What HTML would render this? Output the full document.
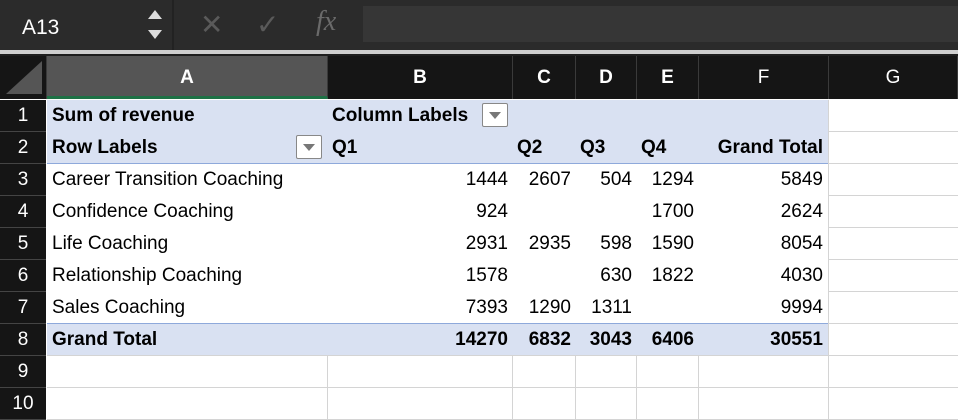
<!DOCTYPE html>
<html><head><style>
body{margin:0;width:958px;height:420px;overflow:hidden;background:#fff;font-family:"Liberation Sans",sans-serif;position:relative}
.tb{position:absolute;left:0;top:0;width:958px;height:50px;background:#2b2b2b}
.sep{position:absolute;left:0;top:50px;width:958px;height:4px;background:#cfcfcf;border-bottom:2px solid #1e1e1e}
.ch{position:absolute;top:56px;height:43px;background:#151515;color:#fff;font-size:19px;line-height:43px;text-align:center;border-right:1px solid #3a3a3a;box-sizing:border-box}
.rh{position:absolute;left:0;width:46px;height:32px;background:#151515;color:#fff;font-size:19px;line-height:32px;text-align:center;border-bottom:1px solid #444;box-sizing:border-box}
.c{position:absolute;height:32px;line-height:32px;font-size:19px;color:#000;white-space:nowrap;box-sizing:border-box}
.r{text-align:right;padding-right:5px}
.b{font-weight:bold}
.vl{position:absolute;width:1px;background:#d4d4d4}
.hl{position:absolute;height:1px;background:#d4d4d4}
.dd{position:absolute;width:26px;height:24px;border:1px solid #888;background:#fff;box-sizing:border-box;border-radius:2px}
.dd:after{content:"";position:absolute;left:6px;top:8px;border-left:6px solid transparent;border-right:6px solid transparent;border-top:7px solid #777}
</style></head><body>
<div class="tb">
 <div style="position:absolute;left:5px;top:0;width:165px;height:50px;background:#2b2b2b;color:#fff;font-size:21px;line-height:56px;padding-left:17px;box-sizing:border-box">A13</div>
 <div style="position:absolute;left:148px;top:10px;border-left:7px solid transparent;border-right:7px solid transparent;border-bottom:9px solid #ddd"></div>
 <div style="position:absolute;left:148px;top:30px;border-left:7px solid transparent;border-right:7px solid transparent;border-top:9px solid #ddd"></div>
 <div style="position:absolute;left:172px;top:0;width:2px;height:50px;background:#222"></div>
 <div style="position:absolute;left:200px;top:8px;color:#5a5a5a;font-size:28px">✕</div>
 <div style="position:absolute;left:256px;top:8px;color:#5a5a5a;font-size:28px">✓</div>
 <div style="position:absolute;left:316px;top:6px;color:#6a6a6a;font-size:28px;font-style:italic;font-family:'Liberation Serif',serif">fx</div>
 <div style="position:absolute;left:363px;top:6px;width:595px;height:36px;background:#363636"></div>
</div>
<div class="sep"></div>
<div class="ch" style="left:0;width:47px;background:#151515"><div style="position:absolute;left:6px;top:5px;border-left:36px solid transparent;border-bottom:33px solid #555"></div></div>
<div class="ch b" style="left:47px;width:281px;background:#555;border-bottom:3px solid #1e7145">A</div>
<div class="ch b" style="left:328px;width:185px">B</div>
<div class="ch b" style="left:513px;width:63px">C</div>
<div class="ch b" style="left:576px;width:61px">D</div>
<div class="ch b" style="left:637px;width:62px">E</div>
<div class="ch" style="left:699px;width:130px">F</div>
<div class="ch" style="left:829px;width:129px">G</div>

<!-- row headers -->
<div class="rh" style="top:100px">1</div><div class="rh" style="top:132px">2</div><div class="rh" style="top:164px">3</div><div class="rh" style="top:196px">4</div><div class="rh" style="top:228px">5</div><div class="rh" style="top:260px">6</div><div class="rh" style="top:292px">7</div><div class="rh" style="top:324px">8</div><div class="rh" style="top:356px">9</div><div class="rh" style="top:388px">10</div>

<!-- grid lines -->
<div class="hl" style="left:47px;top:131px;width:911px"></div>
<div class="hl" style="left:47px;top:163px;width:911px"></div>
<div class="hl" style="left:47px;top:195px;width:911px"></div>
<div class="hl" style="left:47px;top:227px;width:911px"></div>
<div class="hl" style="left:47px;top:259px;width:911px"></div>
<div class="hl" style="left:47px;top:291px;width:911px"></div>
<div class="hl" style="left:47px;top:323px;width:911px"></div>
<div class="hl" style="left:47px;top:355px;width:911px"></div>
<div class="hl" style="left:47px;top:387px;width:911px"></div>
<div class="hl" style="left:47px;top:419px;width:911px"></div>
<div class="vl" style="left:327px;top:356px;height:64px"></div>
<div class="vl" style="left:512px;top:356px;height:64px"></div>
<div class="vl" style="left:575px;top:356px;height:64px"></div>
<div class="vl" style="left:636px;top:356px;height:64px"></div>
<div class="vl" style="left:698px;top:356px;height:64px"></div>
<div class="vl" style="left:828px;top:100px;height:320px"></div>

<!-- pivot backgrounds -->
<div style="position:absolute;left:47px;top:100px;width:781px;height:63px;background:#d9e1f2"></div>
<div style="position:absolute;left:47px;top:164px;width:781px;height:159px;background:#fff"></div>
<div style="position:absolute;left:47px;top:163px;width:781px;height:1px;background:#8ea9db"></div>
<div style="position:absolute;left:47px;top:323px;width:781px;height:1px;background:#8ea9db"></div>
<div style="position:absolute;left:47px;top:324px;width:781px;height:31px;background:#d9e1f2"></div>

<div class="c b" style="left:52px;top:100px">Sum of revenue</div>
<div class="c b" style="left:332px;top:100px">Column Labels</div>
<div class="dd" style="left:482px;top:103px"></div>
<div class="c b" style="left:52px;top:132px">Row Labels</div>
<div class="dd" style="left:296px;top:135px"></div>
<div class="c b" style="left:332px;top:132px">Q1</div>
<div class="c b" style="left:517px;top:132px">Q2</div>
<div class="c b" style="left:580px;top:132px">Q3</div>
<div class="c b" style="left:641px;top:132px">Q4</div>
<div class="c b r" style="left:699px;width:129px;top:132px">Grand Total</div>

<div class="c" style="left:52px;top:164px">Career Transition Coaching</div>
<div class="c" style="left:52px;top:196px">Confidence Coaching</div>
<div class="c" style="left:52px;top:228px">Life Coaching</div>
<div class="c" style="left:52px;top:260px">Relationship Coaching</div>
<div class="c" style="left:52px;top:292px">Sales Coaching</div>
<div class="c b" style="left:52px;top:324px">Grand Total</div>

<div class="c r" style="left:328px;width:185px;top:164px">1444</div>
<div class="c r" style="left:513px;width:63px;top:164px">2607</div>
<div class="c r" style="left:576px;width:61px;top:164px">504</div>
<div class="c r" style="left:637px;width:62px;top:164px">1294</div>
<div class="c r" style="left:699px;width:129px;top:164px">5849</div>

<div class="c r" style="left:328px;width:185px;top:196px">924</div>
<div class="c r" style="left:637px;width:62px;top:196px">1700</div>
<div class="c r" style="left:699px;width:129px;top:196px">2624</div>

<div class="c r" style="left:328px;width:185px;top:228px">2931</div>
<div class="c r" style="left:513px;width:63px;top:228px">2935</div>
<div class="c r" style="left:576px;width:61px;top:228px">598</div>
<div class="c r" style="left:637px;width:62px;top:228px">1590</div>
<div class="c r" style="left:699px;width:129px;top:228px">8054</div>

<div class="c r" style="left:328px;width:185px;top:260px">1578</div>
<div class="c r" style="left:576px;width:61px;top:260px">630</div>
<div class="c r" style="left:637px;width:62px;top:260px">1822</div>
<div class="c r" style="left:699px;width:129px;top:260px">4030</div>

<div class="c r" style="left:328px;width:185px;top:292px">7393</div>
<div class="c r" style="left:513px;width:63px;top:292px">1290</div>
<div class="c r" style="left:576px;width:61px;top:292px">1311</div>
<div class="c r" style="left:699px;width:129px;top:292px">9994</div>

<div class="c r b" style="left:328px;width:185px;top:324px">14270</div>
<div class="c r b" style="left:513px;width:63px;top:324px">6832</div>
<div class="c r b" style="left:576px;width:61px;top:324px">3043</div>
<div class="c r b" style="left:637px;width:62px;top:324px">6406</div>
<div class="c r b" style="left:699px;width:129px;top:324px">30551</div>
</body></html>
